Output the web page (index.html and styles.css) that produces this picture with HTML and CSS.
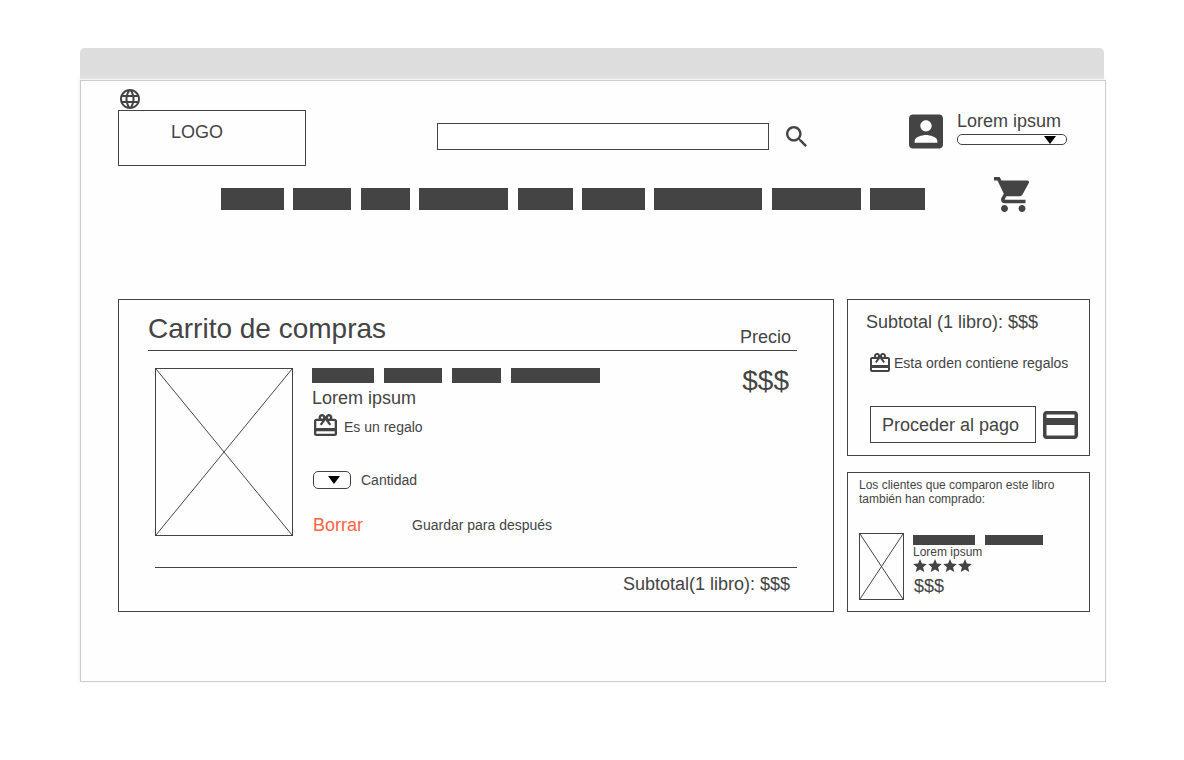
FILE: index.html
```html
<!DOCTYPE html>
<html lang="es">
<head>
<meta charset="utf-8">
<meta name="viewport" content="width=device-width, initial-scale=1">
<title>Carrito de compras</title>
<link rel="stylesheet" href="styles.css">
</head>
<body>
<svg class="defs" aria-hidden="true">
  <symbol id="gift" viewBox="2 2 20 19"><path d="M20 6h-2.18c.11-.31.18-.65.18-1 0-1.66-1.34-3-3-3-1.05 0-1.96.54-2.5 1.35l-.5.67-.5-.68C10.96 2.54 10.05 2 9 2 7.34 2 6 3.34 6 5c0 .35.07.69.18 1H4c-1.11 0-1.99.89-1.99 2L2 19c0 1.11.89 2 2 2h16c1.11 0 2-.89 2-2V8c0-1.11-.89-2-2-2zm-5-2c.55 0 1 .45 1 1s-.45 1-1 1-1-.45-1-1 .45-1 1-1zM9 4c.55 0 1 .45 1 1s-.45 1-1 1-1-.45-1-1 .45-1 1-1zm11 15H4v-2h16v2zm0-5H4V8h5.08L7 10.83 8.62 12 11 8.76l1-1.36 1 1.36L15.38 12 17 10.83 14.92 8H20v6z"/></symbol>
  <symbol id="star" viewBox="2 2 20 19"><path d="M12 17.27L18.18 21l-1.64-7.03L22 9.24l-7.19-.61L12 2 9.19 8.63 2 9.24l5.46 4.73L5.82 21z"/></symbol>
</svg>
<div class="window">
  <div class="titlebar"></div>
  <div class="page">
    <header class="header">
      <div class="brand">
        <button class="icon-button" type="button" aria-label="Idioma">
          <svg class="globe" viewBox="2 2 20 20"><path d="M11.99 2C6.47 2 2 6.48 2 12s4.47 10 9.99 10C17.52 22 22 17.52 22 12S17.52 2 11.99 2zm6.93 6h-2.95c-.32-1.25-.78-2.45-1.38-3.56 1.84.63 3.37 1.91 4.33 3.56zM12 4.04c.83 1.2 1.48 2.53 1.91 3.96h-3.82c.43-1.43 1.08-2.76 1.91-3.96zM4.26 14C4.1 13.36 4 12.69 4 12s.1-1.36.26-2h3.38c-.08.66-.14 1.32-.14 2 0 .68.06 1.34.14 2H4.26zm.82 2h2.95c.32 1.25.78 2.45 1.38 3.56-1.84-.63-3.37-1.9-4.33-3.56zm2.95-8H5.08c.96-1.66 2.49-2.93 4.33-3.56C8.81 5.55 8.35 6.75 8.03 8zM12 19.96c-.83-1.2-1.48-2.53-1.91-3.96h3.82c-.43 1.43-1.08 2.76-1.91 3.96zM14.34 14H9.66c-.09-.66-.16-1.32-.16-2 0-.68.07-1.35.16-2h4.68c.09.65.16 1.32.16 2 0 .68-.07 1.34-.16 2zm.25 5.56c.6-1.11 1.06-2.31 1.38-3.56h2.95c-.96 1.65-2.49 2.93-4.33 3.56zM16.36 14c.08-.66.14-1.32.14-2 0-.68-.06-1.34-.14-2h3.38c.16.64.26 1.31.26 2s-.1 1.36-.26 2h-3.38z"/></svg>
        </button>
        <a class="logo" href="#">LOGO</a>
      </div>
      <form class="search" role="search">
        <input class="search-input" type="search" aria-label="Buscar">
        <button class="icon-button" type="button" aria-label="Buscar">
          <svg class="magnifier" viewBox="3 3 17.49 17.49"><path d="M15.5 14h-.79l-.28-.27C15.41 12.59 16 11.11 16 9.5 16 5.91 13.09 3 9.5 3S3 5.91 3 9.5 5.91 16 9.5 16c1.61 0 3.09-.59 4.23-1.57l.27.28v.79l5 4.99L20.49 19l-4.99-5zm-6 0C7.01 14 5 11.99 5 9.5S7.01 5 9.5 5 14 7.01 14 9.5 11.99 14 9.5 14z"/></svg>
        </button>
      </form>
      <div class="account">
        <svg class="avatar" viewBox="3 3 18 18" aria-hidden="true"><path d="M3 5v14c0 1.1.89 2 2 2h14c1.1 0 2-.9 2-2V5c0-1.1-.9-2-2-2H5c-1.11 0-2 .9-2 2zm12 4c0 1.66-1.34 3-3 3s-3-1.34-3-3 1.34-3 3-3 3 1.34 3 3zm-9 8c0-2 4-3.1 6-3.1s6 1.1 6 3.1v1H6v-1z"/></svg>
        <div class="account-menu">
          <label class="label" for="account">Lorem ipsum</label>
          <div class="dropdown dropdown-account"><select id="account"></select></div>
        </div>
      </div>
    </header>

    <div class="navbar">
      <nav class="nav" aria-label="Secciones">
        <a class="bar w63" href="#" aria-label="Sección 1"></a>
        <a class="bar w58" href="#" aria-label="Sección 2"></a>
        <a class="bar w49" href="#" aria-label="Sección 3"></a>
        <a class="bar w89" href="#" aria-label="Sección 4"></a>
        <a class="bar w55" href="#" aria-label="Sección 5"></a>
        <a class="bar w63" href="#" aria-label="Sección 6"></a>
        <a class="bar w108" href="#" aria-label="Sección 7"></a>
        <a class="bar w89" href="#" aria-label="Sección 8"></a>
        <a class="bar w55" href="#" aria-label="Sección 9"></a>
      </nav>
      <a class="cart-link" href="#" aria-label="Carrito">
        <svg class="cart-icon" viewBox="1 2 20 20"><path d="M7 18c-1.1 0-1.99.9-1.99 2S5.9 22 7 22s2-.9 2-2-.9-2-2-2zM1 2v2h2l3.6 7.59-1.35 2.45c-.16.28-.25.61-.25.96 0 1.1.9 2 2 2h12v-2H7.42c-.14 0-.25-.11-.25-.25l.03-.12.9-1.63h7.45c.75 0 1.41-.41 1.75-1.03l3.58-6.49c.08-.14.12-.31.12-.48 0-.55-.45-1-1-1H5.21l-.94-2H1zm16 16c-1.1 0-1.99.9-1.99 2s.89 2 1.99 2 2-.9 2-2-.9-2-2-2z"/></svg>
      </a>
    </div>

    <main class="content">
      <section class="panel cart">
        <div class="cart-head">
          <h1 class="title">Carrito de compras</h1>
          <span class="label">Precio</span>
        </div>
        <article class="item">
          <svg class="cover" viewBox="0 0 100 100" preserveAspectRatio="none" aria-hidden="true"><path d="M0 0L100 100M100 0L0 100"/></svg>
          <div class="item-info">
            <div class="bars"><span class="bar w62"></span><span class="bar w58"></span><span class="bar w49"></span><span class="bar w89"></span></div>
            <p class="label author">Lorem ipsum</p>
            <div class="gift-row"><svg class="gift-icon" aria-hidden="true"><use href="#gift"/></svg><span>Es un regalo</span></div>
            <div class="quantity">
              <div class="dropdown dropdown-quantity"><select id="quantity"></select></div>
              <label for="quantity">Cantidad</label>
            </div>
            <div class="actions">
              <button class="delete" type="button">Borrar</button>
              <button class="save" type="button">Guardar para después</button>
            </div>
          </div>
          <span class="price">$$$</span>
        </article>
        <p class="label subtotal">Subtotal(1 libro): $$$</p>
      </section>

      <aside class="side">
        <section class="panel summary">
          <p class="label summary-total">Subtotal (1 libro): $$$</p>
          <div class="order-gift"><svg class="order-gift-icon" aria-hidden="true"><use href="#gift"/></svg><span>Esta orden contiene regalos</span></div>
          <div class="checkout-row">
            <button class="checkout" type="button">Proceder al pago</button>
            <svg class="card-icon" viewBox="2 4 20 16" aria-hidden="true"><path d="M20 4H4c-1.11 0-1.99.89-1.99 2L2 18c0 1.11.89 2 2 2h16c1.11 0 2-.89 2-2V6c0-1.11-.89-2-2-2zm0 14H4v-6h16v6zm0-10H4V6h16v2z"/></svg>
          </div>
        </section>
        <section class="panel related">
          <h2 class="related-title">Los clientes que comparon este libro también han comprado:</h2>
          <div class="related-item">
            <svg class="cover cover-small" viewBox="0 0 100 100" preserveAspectRatio="none" aria-hidden="true"><path d="M0 0L100 100M100 0L0 100"/></svg>
            <div class="related-info">
              <div class="bars bars-small"><span class="bar w62"></span><span class="bar w58"></span></div>
              <p class="related-author">Lorem ipsum</p>
              <div class="stars" role="img" aria-label="4 estrellas">
                <svg><use href="#star"/></svg><svg><use href="#star"/></svg><svg><use href="#star"/></svg><svg><use href="#star"/></svg>
              </div>
              <p class="label related-price">$$$</p>
            </div>
          </div>
        </section>
      </aside>
    </main>
  </div>
</div>
</body>
</html>
```

FILE: styles.css
```css
* {
  box-sizing: border-box;
}

body {
  margin: 0;
  padding: 48px 78px 78px 80px;
  background: #fff;
  color: #444;
  font: 14px/18px "Liberation Sans", Arial, sans-serif;
}

h1, h2, p {
  margin: 0;
  font-weight: normal;
}

a {
  color: inherit;
  text-decoration: none;
}

button {
  padding: 0;
  border: 0;
  background: none;
  color: inherit;
  font: inherit;
  cursor: pointer;
}

svg {
  display: block;
  flex: none;
  fill: #444;
}

.defs {
  display: none;
}

.label {
  font-size: 18px;
  line-height: 20px;
}

.titlebar {
  height: 31px;
  margin: 0 2px 1px 0;
  border-radius: 5px 5px 0 0;
  background: #ddd;
}

.page {
  padding: 8px 15px 69px 37px;
  border: 1px solid #ccc;
  background: #fefefe;
  box-shadow: -1px -1px 3px #eee;
}

/* Header */

.header {
  display: flex;
  align-items: flex-start;
  padding-right: 23px;
}

.brand {
  flex: none;
  width: 188px;
}

.icon-button {
  display: block;
}

.brand .icon-button {
  margin: 0 0 1px 2px;
}

.globe {
  width: 20px;
  height: 20px;
}

.logo {
  display: block;
  height: 56px;
  padding: 11px 52px;
  border: 1px solid #444;
  font-size: 18px;
  line-height: 20px;
}

.search {
  display: flex;
  flex: 1;
  align-items: center;
  gap: 17px;
  margin: 34px 102px 0 131px;
}

.search-input {
  flex: 1;
  min-width: 0;
  height: 27px;
  margin: 0;
  padding: 0 8px;
  border: 1px solid #444;
  background: #fff;
  font: inherit;
}

.magnifier {
  width: 21px;
  height: 21px;
}

.account {
  display: flex;
  gap: 14px;
  padding-top: 22px;
}

.avatar {
  width: 34px;
  height: 35px;
  margin-top: 3px;
}

.account-menu {
  width: 110px;
}

.account-menu .label {
  display: block;
  margin-bottom: 3px;
}

.dropdown {
  position: relative;
}

.dropdown select {
  display: block;
  width: 100%;
  height: 100%;
  border: 1px solid #444;
  border-radius: 5px;
  background: #fff;
  appearance: none;
}

.dropdown::after {
  content: "";
  position: absolute;
  top: 50%;
  right: 11px;
  margin-top: -4px;
  border: 6px solid transparent;
  border-top: 8px solid #000;
  border-bottom: 0;
  pointer-events: none;
}

.dropdown-account {
  height: 11px;
}

/* Navigation */

.navbar {
  display: flex;
  align-items: center;
  justify-content: space-between;
  padding: 11px 61px 0 103px;
}

.nav {
  display: flex;
  flex: none;
  justify-content: space-between;
  width: 704px;
  padding-top: 8px;
}

.bar {
  display: block;
  height: 100%;
  background: #444;
}

.nav .bar {
  height: 22px;
}

.w49 { width: 49px; }
.w55 { width: 55px; }
.w58 { width: 58px; }
.w62 { width: 62px; }
.w63 { width: 63px; }
.w89 { width: 89px; }
.w108 { width: 108px; }

.cart-icon {
  width: 35px;
  height: 35px;
}

/* Main columns */

.content {
  display: grid;
  grid-template-columns: minmax(0, 1fr) 243px;
  gap: 13px;
  margin-top: 87px;
}

.panel {
  border: 1px solid #444;
}

/* Cart */

.cart {
  padding: 13px 36px 17px 29px;
}

.cart-head {
  display: flex;
  align-items: flex-end;
  justify-content: space-between;
  padding: 0 6px 3px 0;
  border-bottom: 1px solid #444;
}

.title {
  padding-bottom: 2px;
  font-size: 28px;
  line-height: 32px;
}

.item {
  display: flex;
  margin: 17px 0 0 7px;
  padding: 0 8px 31px 0;
  border-bottom: 1px solid #444;
}

.cover {
  width: 138px;
  height: 168px;
  border: 1px solid #444;
}

.cover path {
  stroke: #444;
  stroke-width: 1px;
  vector-effect: non-scaling-stroke;
}

.item-info {
  flex: 1;
  padding-left: 19px;
}

.bars {
  display: flex;
  gap: 10px;
  height: 15px;
}

.author {
  margin-top: 5px;
}

.gift-row {
  display: flex;
  align-items: center;
  gap: 7px;
  height: 22px;
  margin: 6px 0 0 2px;
}

.gift-icon {
  width: 23px;
  height: 22px;
}

.gift-row span {
  padding-top: 4px;
}

.quantity {
  display: flex;
  align-items: center;
  gap: 10px;
  margin: 35px 0 0 1px;
}

.dropdown-quantity {
  width: 38px;
  height: 18px;
}

.actions {
  display: flex;
  align-items: center;
  gap: 49px;
  margin: 26px 0 0 1px;
}

.delete {
  color: tomato;
  font-size: 18px;
  line-height: 20px;
}

.price {
  font-size: 28px;
  line-height: 26px;
}

.subtotal {
  padding: 6px 7px 0 0;
  text-align: right;
}

/* Side column */

.side {
  display: flex;
  flex-direction: column;
  gap: 16px;
}

.summary {
  padding: 12px 11px 12px 18px;
}

.order-gift {
  display: flex;
  align-items: center;
  gap: 4px;
  margin: 20px 0 0 4px;
  white-space: nowrap;
}

.order-gift-icon {
  width: 20px;
  height: 19px;
}

.order-gift span {
  padding-top: 2px;
}

.checkout-row {
  display: flex;
  align-items: center;
  gap: 7px;
  margin: 34px 0 0 4px;
}

.checkout {
  flex: 1;
  height: 37px;
  padding-left: 11px;
  border: 1px solid #444;
  font-size: 18px;
  text-align: left;
  white-space: nowrap;
}

.card-icon {
  width: 35px;
  height: 28px;
}

.related {
  flex: 1;
  padding: 5px 11px 11px;
}

.related-title,
.related-author {
  font-size: 12px;
  line-height: 14px;
}

.related-item {
  display: flex;
  gap: 9px;
  margin-top: 27px;
}

.cover-small {
  width: 45px;
  height: 67px;
}

.related-info {
  padding-top: 2px;
}

.bars-small {
  height: 10px;
}

.stars {
  display: flex;
  gap: 1px;
}

.stars svg {
  width: 14px;
  height: 13px;
}

.related-price {
  margin: 4px 0 0 1px;
}
```
